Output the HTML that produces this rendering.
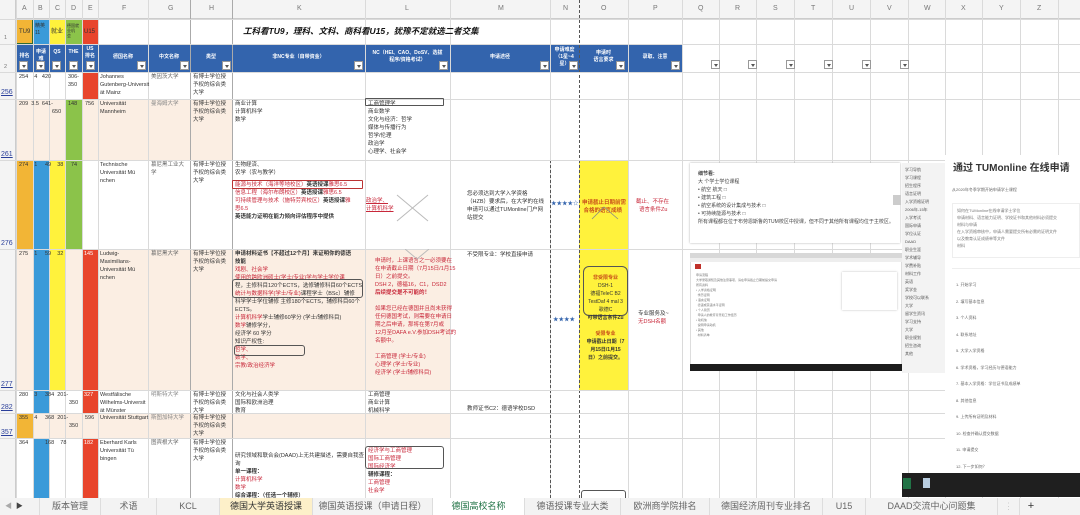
<!DOCTYPE html>
<html><head><meta charset="utf-8"><style>
*{margin:0;padding:0;box-sizing:border-box}
body{width:1080px;height:515px;overflow:hidden;background:#fff;position:relative;font-family:"Liberation Sans","Noto Sans CJK SC",sans-serif;font-size:6px;color:#333}
div{position:absolute}
.v{top:0;width:1px;height:498px;background:#dadada}
.h{left:0;height:1px;width:1080px;background:#dadada}
.t{line-height:8px;font-size:5.5px;white-space:nowrap}
.r{color:#c8283a}
.b{font-weight:bold;color:#111}
.dd{width:9px;height:9px;background:#fff;border:1px solid #999}
.dd:after{content:"";position:absolute;left:2px;top:3px;border-left:2px solid transparent;border-right:2px solid transparent;border-top:3px solid #555}
.hd{color:#fff;font-weight:bold;font-size:5px;text-align:center;line-height:7px}
.tab{top:498px;height:17px;line-height:17px;font-size:9px;color:#666;text-align:center;border-right:1px solid #ddd}
</style></head><body>
<div style="left:0;top:0;width:1080px;height:19px;background:#f4f4f4;border-bottom:1px solid #ccc"></div>
<div style="left:0;top:0;width:16px;height:498px;background:#f4f4f4;border-right:1px solid #ccc"></div>
<div style="left:16px;top:19px;width:17px;height:25px;background:#f2b536;border:1.5px solid #2f6b34"></div>
<div style="left:33px;top:19px;width:16px;height:25px;background:#3a9ad9"></div>
<div style="left:49px;top:19px;width:16px;height:25px;background:#fff23c"></div>
<div style="left:65px;top:19px;width:17px;height:25px;background:#8bc34a"></div>
<div style="left:82px;top:19px;width:16px;height:25px;background:#e8452c"></div>
<div style="left:16px;top:44px;width:666px;height:28px;background:#3364ad"></div>
<div style="left:82px;top:72px;width:16px;height:27px;background:#e8452c"></div>
<div style="left:16px;top:99px;width:216px;height:61px;background:#fbeee3"></div>
<div style="left:65px;top:99px;width:17px;height:61px;background:#8bc34a"></div>
<div style="left:16px;top:160px;width:17px;height:89px;background:#f2b536"></div>
<div style="left:33px;top:160px;width:16px;height:89px;background:#3a9ad9"></div>
<div style="left:49px;top:160px;width:16px;height:89px;background:#fff23c"></div>
<div style="left:65px;top:160px;width:17px;height:89px;background:#8bc34a"></div>
<div style="left:579px;top:160px;width:49px;height:230px;background:#fff23c"></div>
<div style="left:16px;top:249px;width:434px;height:141px;background:#fbeee3"></div>
<div style="left:33px;top:249px;width:16px;height:249px;background:#3a9ad9"></div>
<div style="left:49px;top:249px;width:16px;height:141px;background:#fff23c"></div>
<div style="left:82px;top:249px;width:16px;height:141px;background:#e8452c"></div>
<div style="left:82px;top:390px;width:16px;height:23px;background:#e8452c"></div>
<div style="left:16px;top:413px;width:434px;height:25px;background:#fbeee3"></div>
<div style="left:16px;top:413px;width:17px;height:25px;background:#f2b536"></div>
<div style="left:82px;top:438px;width:16px;height:60px;background:#e8452c"></div>
<div class="v" style="left:16px"></div><div class="v" style="left:33px"></div><div class="v" style="left:49px"></div><div class="v" style="left:65px"></div><div class="v" style="left:82px"></div><div class="v" style="left:98px"></div><div class="v" style="left:148px"></div><div class="v" style="left:190px;background:#aaa"></div><div class="v" style="left:232px;background:#aaa"></div><div class="v" style="left:365px"></div><div class="v" style="left:450px"></div><div class="v" style="left:550px"></div><div class="v" style="left:579px;background:none;border-left:1px dashed #555"></div><div class="v" style="left:628px"></div><div class="v" style="left:682px"></div><div class="v" style="left:719px"></div><div class="v" style="left:756px"></div><div class="v" style="left:794px"></div><div class="v" style="left:832px"></div><div class="v" style="left:870px"></div><div class="v" style="left:908px"></div><div class="v" style="left:945px"></div><div class="v" style="left:982px"></div><div class="v" style="left:1020px"></div><div class="v" style="left:1058px"></div>
<div class="v" style="left:550px;background:none;border-left:1px dashed #555;top:160px;height:338px"></div>
<div class="h" style="top:19px"></div><div class="h" style="top:44px"></div><div class="h" style="top:72px"></div><div class="h" style="top:99px"></div><div class="h" style="top:160px"></div><div class="h" style="top:249px"></div><div class="h" style="top:390px"></div><div class="h" style="top:413px"></div><div class="h" style="top:438px"></div><div class="h" style="top:498px;background:#ccc"></div>
<div class="t" style="top:5px;left:0;width:1080px;color:#777;font-size:7px">
<span style="position:absolute;left:22px">A</span><span style="position:absolute;left:38px">B</span><span style="position:absolute;left:55px">C</span><span style="position:absolute;left:71px">D</span><span style="position:absolute;left:88px">E</span><span style="position:absolute;left:122px">F</span><span style="position:absolute;left:168px">G</span><span style="position:absolute;left:209px">H</span><span style="position:absolute;left:297px">K</span><span style="position:absolute;left:405px">L</span><span style="position:absolute;left:498px">M</span><span style="position:absolute;left:563px">N</span><span style="position:absolute;left:601px">O</span><span style="position:absolute;left:653px">P</span><span style="position:absolute;left:698px">Q</span><span style="position:absolute;left:735px">R</span><span style="position:absolute;left:773px">S</span><span style="position:absolute;left:811px">T</span><span style="position:absolute;left:849px">U</span><span style="position:absolute;left:887px">V</span><span style="position:absolute;left:924px">W</span><span style="position:absolute;left:961px">X</span><span style="position:absolute;left:999px">Y</span><span style="position:absolute;left:1037px">Z</span></div>
<div class="t" style="left:4px;top:34px;color:#777">1</div><div class="t" style="left:4px;top:63px;color:#777">2</div>
<div class="t" style="left:1px;top:89px;color:#2a3f9a;font-size:7px;text-decoration:underline">256</div>
<div class="t" style="left:1px;top:151px;color:#2a3f9a;font-size:7px;text-decoration:underline">261</div>
<div class="t" style="left:1px;top:240px;color:#2a3f9a;font-size:7px">276</div>
<div class="t" style="left:1px;top:381px;color:#2a3f9a;font-size:7px;text-decoration:underline">277</div>
<div class="t" style="left:1px;top:404px;color:#2a3f9a;font-size:7px;text-decoration:underline">282</div>
<div class="t" style="left:1px;top:429px;color:#2a3f9a;font-size:7px;text-decoration:underline">357</div>
<div class="t" style="left:19px;top:28px;font-size:6px">TU9</div>
<div class="t" style="left:35px;top:23px;font-size:5px;line-height:7px">精英<br>11</div>
<div class="t" style="left:51px;top:28px;font-size:6px">就业</div>
<div class="t" style="left:67px;top:23px;font-size:4px;line-height:5px">德国就<br>业机<br>会</div>
<div class="t" style="left:84px;top:28px;font-size:6px">U15</div>
<div class="t b" style="left:243px;top:27px;font-size:8.5px;font-style:italic">工科看TU9，理科、文科、商科看U15，犹豫不定就选二者交集</div>
<div class="hd" style="left:16px;top:53px;width:17px">排名</div>
<div class="hd" style="left:33px;top:49px;width:16px">申请<br>难</div>
<div class="hd" style="left:49px;top:49px;width:16px">QS</div>
<div class="hd" style="left:65px;top:49px;width:17px">THE</div>
<div class="hd" style="left:82px;top:46px;width:16px">US<br>排名</div>
<div class="hd" style="left:98px;top:54px;width:50px">德国名称</div>
<div class="hd" style="left:148px;top:54px;width:42px">中文名称</div>
<div class="hd" style="left:190px;top:54px;width:42px">类型</div>
<div class="hd" style="left:232px;top:54px;width:133px">非NC专业（自带资金）</div>
<div class="hd" style="left:365px;top:50px;width:85px">NC（HEI、CAO、DoSV、选拔<br>程序/资格考试）</div>
<div class="hd" style="left:450px;top:54px;width:100px">申请途径</div>
<div class="hd" style="left:550px;top:47px;width:29px">申请难度<br>（1星~4<br>星）</div>
<div class="hd" style="left:579px;top:50px;width:49px">申请时<br>语言要求</div>
<div class="hd" style="left:628px;top:54px;width:54px">录取、注意</div>
<div class="dd" style="left:19px;top:61px"></div><div class="dd" style="left:36px;top:61px"></div><div class="dd" style="left:52px;top:61px"></div><div class="dd" style="left:69px;top:61px"></div><div class="dd" style="left:86px;top:61px"></div><div class="dd" style="left:137px;top:61px"></div><div class="dd" style="left:180px;top:61px"></div><div class="dd" style="left:222px;top:61px"></div><div class="dd" style="left:354px;top:61px"></div><div class="dd" style="left:439px;top:61px"></div><div class="dd" style="left:540px;top:61px"></div><div class="dd" style="left:569px;top:61px"></div><div class="dd" style="left:616px;top:61px"></div><div class="dd" style="left:671px;top:61px"></div>
<div class="dd" style="left:711px;top:60px"></div><div class="dd" style="left:748px;top:60px"></div><div class="dd" style="left:786px;top:60px"></div><div class="dd" style="left:824px;top:60px"></div><div class="dd" style="left:862px;top:60px"></div><div class="dd" style="left:900px;top:60px"></div>
<div class="t" style="left:19px;top:73px">254&nbsp;&nbsp;&nbsp;&nbsp;4&nbsp;&nbsp;&nbsp;420</div><div class="t" style="left:68px;top:73px">306-<br>350</div><div class="t" style="left:100px;top:73px">Johannes<br>Gutenberg-Universit<br>ät Mainz</div><div class="t" style="left:151px;top:73px;color:#666">美因茨大学</div><div class="t" style="left:193px;top:73px">有博士学位授<br>予权的综合类<br>大学</div>
<div class="t" style="left:19px;top:100px">209&nbsp;&nbsp;3.5&nbsp;&nbsp;641-<br><span style="margin-left:33px">650</span></div><div class="t" style="left:68px;top:100px">148</div><div class="t" style="left:85px;top:100px">756</div><div class="t" style="left:100px;top:100px">Universität<br>Mannheim</div><div class="t" style="left:151px;top:100px;color:#888">曼海姆大学</div><div class="t" style="left:193px;top:100px">有博士学位授<br>予权的综合类<br>大学</div>
<div class="t" style="left:235px;top:100px">商业计算<br>计算机科学<br>数学</div>
<div class="t" style="left:368px;top:100px">工商管理学<br>商业数学<br>文化与经济：哲学<br>媒体与传播行为<br>哲学/伦理<br>政治学<br>心理学、社会学</div>
<div style="left:365px;top:98px;width:79px;height:8px;border:1px solid #555;border-radius:1px"></div>
<div class="t" style="left:19px;top:161px">274&nbsp;&nbsp;&nbsp;&nbsp;1&nbsp;&nbsp;&nbsp;&nbsp;&nbsp;49&nbsp;&nbsp;&nbsp;&nbsp;38&nbsp;&nbsp;&nbsp;&nbsp;&nbsp;74</div><div class="t" style="left:100px;top:161px">Technische<br>Universität Mü<br>nchen</div><div class="t" style="left:151px;top:161px;color:#666">慕尼黑工业大<br>学</div><div class="t" style="left:193px;top:161px">有博士学位授<br>予权的综合类<br>大学</div>
<div class="t" style="left:235px;top:161px">生物経済、<br>农学（农与教学）</div>
<div class="t" style="left:235px;top:181px"><span class="r">能源与技术（海洋等地校区）</span><b>英语授课</b><span class="r">雅思6.5</span><br><span class="r">信息工程（海尔布朗校区）</span><b>英语授课</b><span class="r">雅思6.5</span><br><span class="r">可持续管理与技术（施特劳宾校区）</span><b>英语授课</b><span class="r">雅</span><br><span class="r">思6.5</span><br><b>英语能力证明在能力倾向评估程序中提供</b></div>
<div style="left:232px;top:180px;width:131px;height:9px;border:1px solid #b33;border-radius:1px"></div>
<div class="t r" style="left:366px;top:197px;text-decoration:underline">政治学、<br>计算机科学</div>
<svg style="position:absolute;left:395px;top:193px" width="35" height="30"><path d="M2 2L33 28M33 2L2 28" stroke="#bbb" stroke-width="1"/></svg>
<div class="t" style="left:467px;top:190px">您必须达到大学入学资格<br>（HZB）要求后，在大学的在线<br>申请可以通过TUMonline门户网<br>站提交</div>
<div class="t" style="left:551px;top:200px;color:#3364ad">★★★★☆</div>
<div class="t r" style="left:582px;top:199px;color:#c9501a;font-weight:bold">申请截止日期前需<br>&nbsp;合格的语言成绩</div>
<svg style="position:absolute;left:590px;top:205px" width="30" height="15"><path d="M2 14L14 2L28 14" stroke="#888" fill="none" stroke-width=".8"/></svg>
<div class="t r" style="left:636px;top:198px">截止、不存在<br>&nbsp;&nbsp;语言条件Zu</div>
<div class="t" style="left:19px;top:250px">275&nbsp;&nbsp;&nbsp;&nbsp;1&nbsp;&nbsp;&nbsp;&nbsp;&nbsp;59&nbsp;&nbsp;&nbsp;&nbsp;32</div><div class="t" style="left:84px;top:250px;color:#fff">145</div><div class="t" style="left:100px;top:250px">Ludwig-<br>Maximilians-<br>Universität Mü<br>nchen</div><div class="t" style="left:151px;top:250px;color:#666">慕尼黑大学</div><div class="t" style="left:193px;top:250px">有博士学位授<br>予权的综合类<br>大学</div>
<div class="t" style="left:235px;top:250px"><b>申请材料证书【不超过12个月】来证明你的德语</b><br><b>技能</b><br><span class="r">戏剧、社会学</span><br><span class="r">使用的跨欧洲硕士(学士/专业)学与学士学位课</span><br>程，主修科目120个ECTS，选修辅修科目60个ECTS<br><span class="r">统计与数据科学(学士/专业)</span>课程学士（BSc）辅修<br>科学学士学位辅修 主修180个ECTS，辅修科目60个<br>ECTS。<br><span class="r">计算机科学</span>学士辅修60学分 (学士/辅修科目)<br><span class="r">数学</span>辅修学分，<br>经济学 60 学分<br>知识产权性:<br><span class="r">哲学、</span><br><span class="r">数学、</span><br><span class="r">宗教/政治经济学</span></div>
<div style="left:232px;top:279px;width:131px;height:19px;border:1px solid #555;border-radius:3px"></div>
<div style="left:234px;top:345px;width:71px;height:11px;border:1px solid #555;border-radius:3px"></div>
<div class="t r" style="left:375px;top:257px">申请时，上课语言之一必须要在<br>在申请截止日期（7月15日/1月15<br>日）之前提交。<br>DSH 2，德福16，C1，DSD2<br><b>后续提交是不可能的！</b><br><br>如果您已经在德国并且尚未获得<br>任何德国考试，则需要在申请日<br>期之后申请，那将在第7月或<br>12月至DAFA e.V.参加DSH考试的<br>名额中。<br><br>工商管理 (学士/专业)<br>心理学 (学士/专业)<br>经济学 (学士/辅修科目)</div>
<svg style="position:absolute;left:405px;top:249px" width="25" height="12"><path d="M0 0L12 10L24 0" stroke="#bbb" fill="none"/></svg>
<div class="t" style="left:467px;top:251px">不受限专业：学校直接申请</div>
<div class="t" style="left:553px;top:316px;color:#3364ad">★★★★</div>
<div style="left:583px;top:266px;width:45px;height:50px;border:1px solid #555;border-radius:6px"></div>
<div class="t" style="left:582px;top:274px;width:47px;text-align:center;font-size:5px"><span class="r" style="color:#c9501a;font-weight:bold">非受限专业</span><br>DSH-1<br>德福TeleC B2<br>TestDaf 4 mal 3<br>歌德C<br><b>可带语言条件Zu</b></div>
<div class="t" style="left:582px;top:330px;width:47px;text-align:center;font-size:5px"><span style="color:#c9501a;font-weight:bold">受限专业</span><br><b>申请截止日期（7<br>月15日/1月15<br>日）之前提交。</b></div>
<div class="t" style="left:638px;top:310px">专业服务及~<br><span class="r">无DSH名额</span></div>
<div class="t" style="left:19px;top:391px">280&nbsp;&nbsp;&nbsp;&nbsp;3&nbsp;&nbsp;&nbsp;&nbsp;&nbsp;384&nbsp;&nbsp;201-<br><span style="margin-left:50px">350</span></div><div class="t" style="left:84px;top:391px;color:#fff">327</div><div class="t" style="left:100px;top:391px">Westfälische<br>Wilhelms-Universit<br>ät Münster</div><div class="t" style="left:151px;top:391px;color:#888">明斯特大学</div><div class="t" style="left:193px;top:391px">有博士学位授<br>予权的综合类<br>大学</div>
<div class="t" style="left:235px;top:391px">文化与社会人类学<br>国际和欧洲治理<br>教育</div>
<div class="t" style="left:368px;top:391px">工商管理<br>商业计算<br>机械科学</div>
<div class="t" style="left:467px;top:405px">教师证书C2：德语学校DSD</div>
<div class="t" style="left:19px;top:414px">355&nbsp;&nbsp;&nbsp;&nbsp;4&nbsp;&nbsp;&nbsp;&nbsp;&nbsp;368&nbsp;&nbsp;201-<br><span style="margin-left:50px">350</span></div><div class="t" style="left:85px;top:414px">596</div><div class="t" style="left:100px;top:414px">Universität Stuttgart</div><div class="t" style="left:151px;top:414px;color:#888">斯图加特大学</div><div class="t" style="left:193px;top:414px">有博士学位授<br>予权的综合类<br>大学</div>
<div class="t" style="left:19px;top:439px">364&nbsp;&nbsp;&nbsp;&nbsp;&nbsp;&nbsp;&nbsp;&nbsp;&nbsp;&nbsp;&nbsp;168&nbsp;&nbsp;&nbsp;&nbsp;78</div><div class="t" style="left:84px;top:439px;color:#fff">182</div><div class="t" style="left:100px;top:439px">Eberhard Karls<br>Universität Tü<br>bingen</div><div class="t" style="left:151px;top:439px;color:#666">图宾根大学</div><div class="t" style="left:193px;top:439px">有博士学位授<br>予权的综合类<br>大学</div>
<div class="t" style="left:235px;top:452px">研究领域和联合会(DAAD)上无共建描述，需要自我查<br>询<br><b>单一课程：</b><br><span class="r">计算机科学</span><br><span class="r">数学</span><br><b>综合课程：（任选一个辅修）</b></div>
<div class="t" style="left:368px;top:447px"><span class="r">经济学与工商管理<br>国际工商管理<br>国际经济学</span><br><b>辅修课程：</b><br><span class="r">工商管理</span><br><span class="r">社会学</span></div>
<div style="left:365px;top:446px;width:79px;height:23px;border:1px solid #555;border-radius:3px"></div>
<div style="left:581px;top:490px;width:45px;height:10px;border:1px solid #555;border-radius:3px 3px 0 0"></div>
<div style="left:690px;top:163px;width:210px;height:80px;background:#fff;box-shadow:0 0 2px #aaa"></div>
<div class="t" style="left:698px;top:170px;font-size:5px;line-height:8px;color:#444"><b>细节看:</b><br>大 个学士学位课程<br>• 航空 航天 □<br>• 建筑工程 □<br>• 航空系统的设计集成与技术 □<br>• 可持续能源与技术 □<br>所有课程都在位于布劳恩斯鲁的TUM校区中授课，但不同于其他所有课程均位于主校区。</div>
<div style="left:893px;top:195px;width:8px;height:10px;background:#ccc"></div>
<div style="left:902px;top:163px;width:43px;height:210px;background:#f3f3f3"></div>
<div class="t" style="left:905px;top:166px;font-size:4px;line-height:8px;color:#555">学习导航<br>学习课程<br>招生程序<br>语言证明<br>入学资格证明<br>2006年-15年<br>入学考试<br>国际申请<br>学位认证<br>DAAD<br>职业生涯<br>学术辅导<br>学费补贴<br>材料工作<br>英语<br>奖学金<br>学校可以联系<br>大学<br>留学生资讯<br>学习支持<br>大学<br>职业规划<br>招生咨询<br>其他</div>
<div style="left:945px;top:155px;width:135px;height:318px;background:#fff"></div>
<div class="t" style="left:953px;top:163px;font-size:10px;line-height:12px;color:#333;font-weight:bold">通过 TUMonline 在线申请</div>
<div class="t" style="left:952px;top:186px;font-size:4px;color:#666">从2020年冬季学期开始申请学士课程</div>
<div style="left:952px;top:203px;width:128px;height:55px;border:1px solid #eee"></div>
<div class="t" style="left:957px;top:207px;font-size:4px;line-height:7px;color:#777">如何在TUMonline在线申请学士学位<br>申请材料、语言能力证明、学校证书和其他材料必须提交<br>材料与申请<br>在入学资格审核中，申请人需要提交所有必需的证明文件<br>以及教育认证成绩单等文件<br>材料</div>
<div class="t" style="left:956px;top:277px;font-size:4px;line-height:16.5px;color:#666">1. 开始学习<br>2. 填写基本信息<br>3. 个人资料<br>4. 联系地址<br>5. 大学入学资格<br>6. 学术资格，学习经历与德语能力<br>7. 基本入学资格：学位证书及成绩单<br>8. 其他信息<br>9. 上传所有证明及材料<br>10. 检查并确认提交数据<br>11. 申请提交<br>12. 下一步如何？</div>
<div style="left:952px;top:268px;width:128px;height:1px;background:#eee"></div>
<div style="left:690px;top:253px;width:212px;height:118px;background:#fff;border:1px solid #ddd"></div>
<div style="left:690px;top:253px;width:212px;height:5px;background:#d8d8d8"></div>
<div style="left:690px;top:258px;width:212px;height:4px;background:#eee"></div>
<div style="left:695px;top:264px;width:6px;height:5px;background:#c0312b"></div>
<div style="left:842px;top:272px;width:55px;height:38px;background:#fff;box-shadow:0 0 2px #bbb"></div>
<div class="t" style="left:696px;top:273px;font-size:3px;line-height:5px;color:#777">申请流程<br>大学录取通知及其他注意事项，请在申请截止日期前提交申请<br>所有资料<br>• 入学资格证明<br>&nbsp;&nbsp;学历证明<br>• 语言证明<br>&nbsp;&nbsp;德语或英语水平证明<br>• 个人简历<br>&nbsp;&nbsp;申请人的教育背景和工作经历<br>• 动机信<br>&nbsp;&nbsp;说明申请动机<br>• 其他<br>&nbsp;&nbsp;材料清单</div>
<div style="left:690px;top:364px;width:212px;height:7px;background:#1d1d1d"></div>
<div style="left:902px;top:473px;width:178px;height:24px;background:#1f1f1f"></div>
<div style="left:903px;top:478px;width:8px;height:11px;background:#217346"></div>
<div style="left:923px;top:478px;width:7px;height:10px;background:#b8cde0"></div>
<div style="left:0;top:498px;width:1080px;height:17px;background:#f3f3f3"></div>
<div class="t" style="left:5px;top:503px;font-size:7px;color:#aaa">◀&nbsp;&nbsp;<span style="color:#444">▶</span></div>
<div class="tab" style="left:39px;width:62px;border-left:1px solid #ddd">版本管理</div>
<div class="tab" style="left:101px;width:56px">术语</div>
<div class="tab" style="left:157px;width:63px">KCL</div>
<div class="tab" style="left:220px;width:93px;background:#fdf0c9;color:#333">德国大学英语授课</div>
<div class="tab" style="left:313px;width:120px">德国英语授课（申请日程）</div>
<div class="tab" style="left:433px;width:92px;background:#fff;color:#217346">德国高校名称</div>
<div class="tab" style="left:525px;width:96px">德语授课专业大类</div>
<div class="tab" style="left:621px;width:89px">欧洲商学院排名</div>
<div class="tab" style="left:710px;width:113px">德国经济周刊专业排名</div>
<div class="tab" style="left:823px;width:43px">U15</div>
<div class="tab" style="left:866px;width:132px">DAAD交流中心问题集</div>
<div class="tab" style="left:998px;width:22px;color:#ccc">⋮</div>
<div class="tab" style="left:1020px;width:22px;color:#333;border:none;font-size:11px">+</div>
</body></html>
